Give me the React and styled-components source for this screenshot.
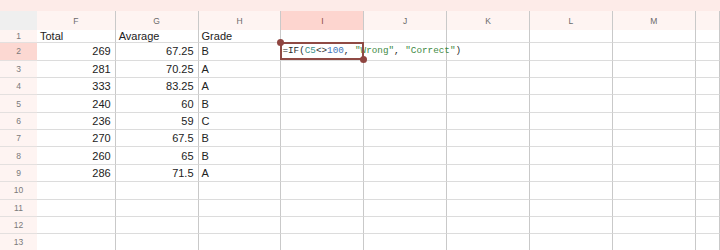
import React from 'react'
import styled, { createGlobalStyle } from 'styled-components'

const Global = createGlobalStyle`
  html, body { margin: 0; padding: 0; background: #fff; }
  body { font-family: "Liberation Sans", Arial, sans-serif; overflow: hidden; }
`

const COLS = ['F', 'G', 'H', 'I', 'J', 'K', 'L', 'M', '']

const DATA = [
  ['Total', 'Avarage', 'Grade'],
  [269, 67.25, 'B'],
  [281, 70.25, 'A'],
  [333, 83.25, 'A'],
  [240, 60, 'B'],
  [236, 59, 'C'],
  [270, 67.5, 'B'],
  [260, 65, 'B'],
  [286, 71.5, 'A'],
]

const Page = styled.div`
  width: 720px;
  height: 250px;
  overflow: hidden;
`

const TopBand = styled.div`
  height: 11px;
  background: #fdebe8;
`

const Sheet = styled.div`
  display: grid;
  grid-template-columns: 37px 78.7px repeat(7, 82.86px) 1fr;
  grid-template-rows: 19px 13.3px;
  grid-auto-rows: 17.36px;
`

const Corner = styled.div`
  background: #efefef;
`

const ColHeader = styled.div`
  background: ${p => (p.$active ? '#fdd5cf' : '#fef4f2')};
  color: ${p => (p.$active ? '#8a4842' : '#6a6a6a')};
  border-right: 1px solid #c9c9c9;
  font-size: 8.5px;
  display: flex;
  align-items: center;
  justify-content: center;
`

const RowHeader = styled.div`
  background: ${p => (p.$active ? '#fcd8d2' : '#fef4f2')};
  color: #7a7a7a;
  font-size: 8.5px;
  border-bottom: 1px solid #e4e0df;
  display: flex;
  align-items: center;
  justify-content: center;
`

const Cell = styled.div`
  position: relative;
  border-right: 1px solid #c9c9c9;
  border-bottom: 1px solid #dcdcdc;
  font-size: 11px;
  color: #222;
  line-height: 12px;
  display: flex;
  align-items: center;
  justify-content: ${p => (p.$right ? 'flex-end' : 'flex-start')};
  padding: 0 4px 0 3px;
  white-space: nowrap;
  overflow: visible;
  box-sizing: border-box;
  min-width: 0;
`

const Formula = styled.span`
  font-family: "Liberation Mono", "DejaVu Sans Mono", monospace;
  font-size: 9.3px;
  color: #2a2a2a;
  position: relative;
  z-index: 1;
  margin-left: -2px;
`

const Tok = styled.span`
  color: ${p => p.$c};
`

const Selection = styled.div`
  position: absolute;
  left: -1px;
  top: -1px;
  right: -1px;
  bottom: 0;
  border: 2px solid #8f4a44;
  z-index: 2;
  pointer-events: none;
`

const Handle = styled.div`
  position: absolute;
  width: 7px;
  height: 7px;
  border-radius: 50%;
  background: #8f4540;
  ${p => (p.$end ? 'right: -5px; bottom: -5px;' : 'left: -5px; top: -5px;')}
`

function FormulaText() {
  return (
    <Formula>
      =IF(<Tok $c="#3a9088">C5</Tok>&lt;&gt;<Tok $c="#4276bd">100</Tok>,{' '}
      <Tok $c="#428a45">"Wrong"</Tok>, <Tok $c="#428a45">"Correct"</Tok>)
    </Formula>
  )
}

export default function App() {
  const rows = Array.from({ length: 13 }, (_, i) => i + 1)
  return (
    <Page>
      <Global />
      <TopBand />
      <Sheet>
        <Corner />
        {COLS.map((c, i) => (
          <ColHeader key={i} $active={c === 'I'}>{c}</ColHeader>
        ))}
        {rows.map(r => {
          const data = DATA[r - 1] || []
          return (
            <React.Fragment key={r}>
              <RowHeader $active={r === 2}>{r}</RowHeader>
              {COLS.map((c, ci) => {
                const v = data[ci]
                const isNum = typeof v === 'number'
                if (r === 2 && c === 'I') {
                  return (
                    <Cell key={ci}>
                      <FormulaText />
                      <Selection>
                        <Handle />
                        <Handle $end />
                      </Selection>
                    </Cell>
                  )
                }
                return (
                  <Cell key={ci} $right={isNum}>
                    {v !== undefined ? v : ''}
                  </Cell>
                )
              })}
            </React.Fragment>
          )
        })}
      </Sheet>
    </Page>
  )
}
